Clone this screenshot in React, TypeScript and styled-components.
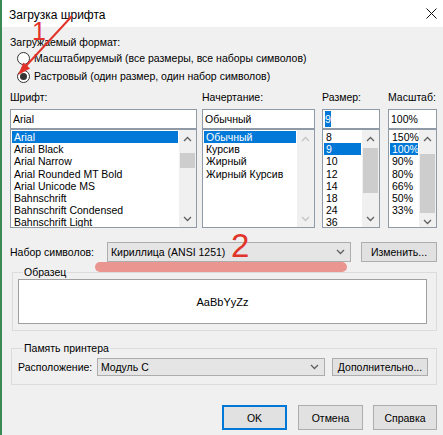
import React from "react";
import styled, { createGlobalStyle } from "styled-components";

const Global = createGlobalStyle`
  html, body { margin: 0; padding: 0; background: #f0f0f0; }
  body { font-family: "Liberation Sans", Arial, sans-serif; }
  * { box-sizing: border-box; }
`;

const Window = styled.div`
  position: relative;
  width: 443px;
  height: 435px;
  background: #f0f0f0;
  border-left: 2px solid #3b8a55;
  display: flex;
  flex-direction: column;
  overflow: hidden;
  font-family: "Liberation Sans", Arial, sans-serif;
  font-size: 10.5px;
  color: #000;
`;

const TitleBar = styled.div`
  height: 27px;
  background: #fff;
  display: flex;
  align-items: center;
  justify-content: space-between;
  padding: 0 6px 0 7px;
  flex-shrink: 0;
`;

const Title = styled.span`
  font-size: 12px;
  color: #000;
  margin-top: 2px;
`;

const Body = styled.div`
  padding: 9px 6px 0 8px;
  display: flex;
  flex-direction: column;
`;

const SectionLabel = styled.div`
  height: 13px;
  line-height: 13px;
  white-space: nowrap;
`;

const RadioRow = styled.div`
  height: 18px;
  display: flex;
  align-items: center;
  gap: 4px;
  padding-left: 7px;
  white-space: nowrap;
`;

const RadioCircle = styled.span<{ $checked?: boolean }>`
  width: 13px;
  height: 13px;
  border-radius: 50%;
  border: 1px solid #333;
  background: #fff;
  display: inline-flex;
  align-items: center;
  justify-content: center;
  flex-shrink: 0;
  &::after {
    content: "";
    width: 7px;
    height: 7px;
    border-radius: 50%;
    background: ${(p) => (p.$checked ? "#333" : "transparent")};
  }
`;

const Columns = styled.div`
  display: flex;
`;

const Column = styled.div<{ $w: number; $ml?: number }>`
  width: ${(p) => p.$w}px;
  margin-left: ${(p) => p.$ml ?? 0}px;
  display: flex;
  flex-direction: column;
`;

const ColLabel = styled.div`
  height: 24px;
  line-height: 24px;
  white-space: nowrap;
`;

const TextBox = styled.div`
  height: 20px;
  border: 1px solid #8f9aa6;
  background: #fff;
  padding-left: 2px;
  display: flex;
  align-items: center;
  white-space: nowrap;
`;

const Selected = styled.span`
  background: #0078d7;
  color: #fff;
  line-height: 16px;
`;

const ListBox = styled.div`
  height: 99px;
  border: 1px solid #8f9aa6;
  background: #fff;
  display: flex;
  overflow: hidden;
`;

const Items = styled.div`
  flex: 1;
  padding: 1px 1px 0 1px;
  min-width: 0;
`;

const Item = styled.div<{ $sel?: boolean }>`
  height: 12.2px;
  line-height: 12.2px;
  padding-left: 2px;
  white-space: nowrap;
  background: ${(p) => (p.$sel ? "#0078d7" : "transparent")};
  color: ${(p) => (p.$sel ? "#fff" : "#000")};
`;

const ScrollBar = styled.div`
  width: 17px;
  flex-shrink: 0;
  background: #f0f0f0;
  display: flex;
  flex-direction: column;
`;

const ArrowCell = styled.div`
  height: 17px;
  display: flex;
  align-items: center;
  justify-content: center;
  flex-shrink: 0;
`;

const Track = styled.div`
  flex: 1;
  padding: 0 1px;
`;

const Thumb = styled.div<{ $top: number; $h: number }>`
  margin-top: ${(p) => p.$top}px;
  height: ${(p) => p.$h}px;
  background: #cdcdcd;
`;

const Chevron: React.FC<{ up?: boolean; disabled?: boolean }> = ({ up, disabled }) => (
  <svg width="9" height="6" viewBox="0 0 9 6">
    <polyline
      points={up ? "1,5 4.5,1.5 8,5" : "1,1 4.5,4.5 8,1"}
      fill="none"
      stroke={disabled ? "#c4c4c4" : "#606060"}
      strokeWidth="1.3"
    />
  </svg>
);

const Scroll: React.FC<{ thumb?: { top: number; h: number }; disabled?: boolean }> = ({
  thumb,
  disabled,
}) => (
  <ScrollBar>
    <ArrowCell>
      <Chevron up disabled={disabled} />
    </ArrowCell>
    <Track>{thumb && <Thumb $top={thumb.top} $h={thumb.h} />}</Track>
    <ArrowCell>
      <Chevron disabled={disabled} />
    </ArrowCell>
  </ScrollBar>
);

const Row = styled.div<{ $mt: number }>`
  display: flex;
  align-items: center;
  margin-top: ${(p) => p.$mt}px;
`;

const RowLabel = styled.span<{ $w: number }>`
  width: ${(p) => p.$w}px;
  white-space: nowrap;
  flex-shrink: 0;
`;

const Combo = styled.div<{ $w: number; $h: number }>`
  width: ${(p) => p.$w}px;
  height: ${(p) => p.$h}px;
  background: #e5e5e5;
  border: 1px solid #adadad;
  display: flex;
  align-items: center;
  justify-content: space-between;
  padding: 0 5px 0 3px;
  white-space: nowrap;
  flex-shrink: 0;
`;

const Button = styled.div<{ $w: number; $h: number; $ml?: number; $default?: boolean }>`
  width: ${(p) => p.$w}px;
  height: ${(p) => p.$h}px;
  margin-left: ${(p) => p.$ml ?? 0}px;
  background: #e1e1e1;
  border: ${(p) => (p.$default ? "2px solid #0078d7" : "1px solid #adadad")};
  display: flex;
  align-items: center;
  justify-content: center;
  white-space: nowrap;
  flex-shrink: 0;
`;

const Group = styled.fieldset<{ $mt: number; $ml: number; $pad: string }>`
  margin: ${(p) => p.$mt}px 0 0 ${(p) => p.$ml}px;
  padding: ${(p) => p.$pad};
  border: 1px solid #dcdcdc;
  min-inline-size: 0;
`;

const Legend = styled.legend`
  padding: 0 1px;
  margin-left: 5px;
  line-height: 13px;
  font-size: 10.5px;
`;

const Sample = styled.div`
  height: 45px;
  background: #fff;
  border: 1px solid #a0a0a0;
  display: flex;
  align-items: center;
  justify-content: center;
  font-size: 11px;
`;

const ButtonRow = styled.div`
  display: flex;
  justify-content: flex-end;
  margin-top: 20px;
`;

const Overlay = styled.svg`
  position: absolute;
  left: -2px;
  top: 0;
  pointer-events: none;
`;

const Number = styled.span<{ $x: number; $y: number; $size: number }>`
  position: absolute;
  left: ${(p) => p.$x}px;
  top: ${(p) => p.$y}px;
  font-size: ${(p) => p.$size}px;
  line-height: 1;
  color: #e2332b;
  font-family: "Liberation Sans", Arial, sans-serif;
  pointer-events: none;
`;

const Marker = styled.div`
  position: absolute;
  left: 93px;
  top: 262px;
  width: 252px;
  height: 10px;
  border-radius: 5px;
  background: #ea958f;
`;

const fonts = [
  "Arial",
  "Arial Black",
  "Arial Narrow",
  "Arial Rounded MT Bold",
  "Arial Unicode MS",
  "Bahnschrift",
  "Bahnschrift Condensed",
  "Bahnschrift Light",
];
const styles = ["Обычный", "Курсив", "Жирный", "Жирный Курсив"];
const sizes = ["8", "9", "10", "12", "14", "18", "24", "36"];
const scales = ["150%", "100%", "90%", "80%", "66%", "50%", "33%"];

export default function App() {
  return (
    <>
      <Global />
      <Window>
        <TitleBar>
          <Title>Загрузка шрифта</Title>
          <svg width="11" height="11" viewBox="0 0 11 11">
            <path d="M0.5 0.5 L10.5 10.5 M10.5 0.5 L0.5 10.5" stroke="#111" strokeWidth="1" />
          </svg>
        </TitleBar>
        <Body>
          <SectionLabel>Загружаемый формат:</SectionLabel>
          <RadioRow>
            <RadioCircle />
            <span>Масштабируемый (все размеры, все наборы символов)</span>
          </RadioRow>
          <RadioRow>
            <RadioCircle $checked />
            <span>Растровый (один размер, один набор символов)</span>
          </RadioRow>

          <Columns>
            <Column $w={187}>
              <ColLabel>Шрифт:</ColLabel>
              <TextBox>Arial</TextBox>
              <ListBox>
                <Items>
                  {fonts.map((f, i) => (
                    <Item key={f} $sel={i === 0}>
                      {f}
                    </Item>
                  ))}
                </Items>
                <Scroll thumb={{ top: 6, h: 15 }} />
              </ListBox>
            </Column>
            <Column $w={113} $ml={5}>
              <ColLabel>Начертание:</ColLabel>
              <TextBox>Обычный</TextBox>
              <ListBox>
                <Items>
                  {styles.map((s, i) => (
                    <Item key={s} $sel={i === 0}>
                      {s}
                    </Item>
                  ))}
                </Items>
                <Scroll disabled />
              </ListBox>
            </Column>
            <Column $w={58} $ml={7}>
              <ColLabel>Размер:</ColLabel>
              <TextBox>
                <Selected>9</Selected>
              </TextBox>
              <ListBox>
                <Items>
                  {sizes.map((s, i) => (
                    <Item key={s} $sel={i === 1}>
                      {s}
                    </Item>
                  ))}
                </Items>
                <Scroll thumb={{ top: 1, h: 45 }} />
              </ListBox>
            </Column>
            <Column $w={49} $ml={8}>
              <ColLabel>Масштаб:</ColLabel>
              <TextBox>100%</TextBox>
              <ListBox>
                <Items>
                  {scales.map((s, i) => (
                    <Item key={s} $sel={i === 1}>
                      {s}
                    </Item>
                  ))}
                </Items>
                <Scroll thumb={{ top: 7, h: 59 }} />
              </ListBox>
            </Column>
          </Columns>

          <Row $mt={14}>
            <RowLabel $w={97}>Набор символов:</RowLabel>
            <Combo $w={244} $h={20}>
              <span>Кириллица (ANSI 1251)</span>
              <Chevron />
            </Combo>
            <Button $w={76} $h={20} $ml={10}>
              Изменить...
            </Button>
          </Row>

          <Group $mt={4} $ml={2} $pad="0 9px 6px 5px">
            <Legend>Образец</Legend>
            <Sample>AaBbYyZz</Sample>
          </Group>

          <Group $mt={11} $ml={1} $pad="3px 8px 8px 6px">
            <Legend>Память принтера</Legend>
            <Row $mt={0}>
              <RowLabel $w={79}>Расположение:</RowLabel>
              <Combo $w={228} $h={18}>
                <span>Модуль С</span>
                <Chevron />
              </Combo>
              <Button $w={96} $h={18} $ml={7}>
                Дополнительно...
              </Button>
            </Row>
          </Group>

          <ButtonRow>
            <Button $w={65} $h={25} $default>
              OK
            </Button>
            <Button $w={65} $h={25} $ml={11}>
              Отмена
            </Button>
            <Button $w={64} $h={25} $ml={10}>
              Справка
            </Button>
          </ButtonRow>
        </Body>

        <Marker />
        <Number $x={30} $y={19} $size={25}>
          1
        </Number>
        <Number $x={229} $y={229} $size={33}>
          2
        </Number>
        <Overlay width="443" height="435" viewBox="0 0 443 435">
          <line x1="72" y1="16" x2="25" y2="67" stroke="#e2332b" strokeWidth="2" />
          <polygon points="18,75 30.1,68.4 23.5,62.4" fill="#e2332b" />
        </Overlay>
      </Window>
    </>
  );
}
